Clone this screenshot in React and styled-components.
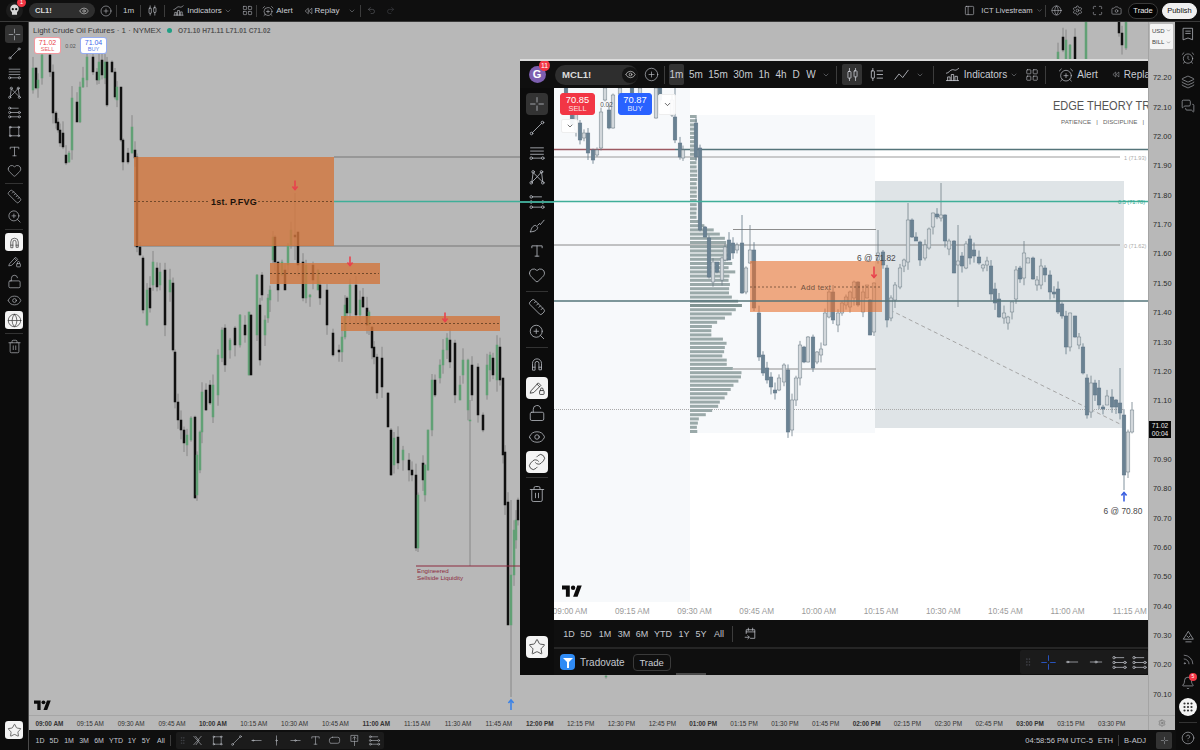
import React from "react";
import styled, { createGlobalStyle } from "styled-components";
import {
  AlarmClock, AlarmClockPlus, Bell, Camera, ChevronDown, CircleHelp, CirclePlus, Eye, Globe, Grip,
  GripVertical, Heart, Layers, LayoutGrid, Link, LockOpen, Maximize, MessagesSquare, PanelLeft, Redo2,
  Rss, Ruler, Settings, Star, Trash2, Undo2, ZoomIn,
} from "lucide-react";

const GlobalStyle = createGlobalStyle`
  html, body { margin: 0; padding: 0; background: #0f0f0f; }
  body { font-family: "Liberation Sans", Arial, sans-serif; overflow: hidden; }
  * { box-sizing: border-box; }
`;

// [x, bodyTop, bodyBottom, up, wickTop, wickBottom] in page pixels
const OUTER_CANDLES = [
  [33,68,90,1],[36,68,88,0],[38,80,88,1],[42,55,78,1],[50,55,72,0],[53,72,113,0],[56,113,123,0],[58,122,130,0],
  [60,130,143,0],[63,133,147,0],[66,155,163,0],[69,153,162,1],[72,98,150,1],[77,102,122,0],[80,87,122,1],
  [83,78,87,1],[87,57,80,1],[93,57,72,0],[97,72,80,0],[99,62,80,1],[102,60,75,0],[105,62,78,1],[107,62,105,0],
  [112,62,72,0],[115,72,97,0],[117,87,100,1],[121,87,140,0],[123,140,162,0],[128,153,162,0],[132,127,153,1],
  [135,150,158,0],[137,157,247,0],[140,247,255,0],[143,258,310,0],[147,290,325,1],[150,288,308,0],[153,262,285,1],
  [157,268,287,0],[160,272,285,1],[165,270,325,0],[170,280,292,1],[173,283,350,0],[175,352,402,0],[178,402,420,0],
  [181,420,430,0],[184,430,443,0],[187,435,445,1],[191,418,440,1],[195,417,498,0],[197,455,495,1],[200,432,470,1],
  [202,392,432,1],[206,390,410,0],[210,385,403,0],[213,385,417,1],[218,355,395,1],[222,330,358,1],[225,328,365,0],
  [230,340,350,1],[235,328,345,0],[240,315,345,1],[245,325,335,0],[249,312,375,1],[251,315,375,0],[257,275,335,1],
  [260,305,360,0],[262,275,295,0],[265,320,335,1],[268,298,318,1],[270,290,300,1],[273,237,260,1],[275,237,262,0],
  [278,262,290,0],[282,262,275,1],[285,270,290,0],[288,245,265,1],[291,230,245,1],[295,235,237,0,193,260],
  [298,232,265,0],[303,262,298,0],[306,265,298,1],[310,295,297,1],[313,265,280,0],[318,270,290,1],[320,285,298,0],
  [327,290,325,0],[333,333,355,0],[339,350,352,0],[342,337,352,1],[345,305,337,1],[347,298,313,0],[350,285,313,1],
  [356,285,315,0],[360,300,315,1],[363,297,307,0],[367,308,325,0],[369,312,325,1],[372,327,348,0],[374,347,357,0],
  [377,357,393,0],[382,358,387,0],[388,393,427,0],[391,430,475,0],[394,438,465,1],[398,437,463,0],[403,450,460,1],
  [409,460,470,0],[412,470,475,0],[416,475,548,0],[418,495,548,1],[423,463,480,0],[425,465,495,1],[428,430,470,1],
  [432,380,430,1],[435,380,395,0],[440,365,378,1],[443,350,365,1],[447,338,350,1],[450,340,362,0],[455,343,395,0],
  [460,385,400,1],[463,360,375,1],[468,360,410,1],[470,420,421,1,400,566],[472,365,395,0],[478,367,415,0],
  [483,415,430,0],[487,365,395,1],[490,355,370,1],[493,358,375,0],[497,345,380,1],[500,347,380,0],[503,378,455,0],
  [505,452,505,0],[508,502,625,0],[511,575,625,1,500,697],[514,530,575,1],[516,520,540,1],[518,500,520,0],
  [606,676,677,1],
  [1058,52,60,1],[1063,37,50,0],[1066,40,60,1],[1070,45,60,1],[1075,37,60,0],[1086,22,60,1],[1119,22,33,0],
  [1122,33,45,0],[1126,22,48,1],
];

const FLOAT_CANDLES = [
  [566,88,98,0],[572,100,125,0],[576,105,130,1],[580,123,140,0],[584,133,138,1],[588,133,153,0],[593,150,160,0],
  [597,150,155,1],[601,112,148,1],[605,88,100,1],[609,110,128,0],[613,95,128,1],[620,88,94,1],[632,88,96,0],
  [640,88,96,1],[656,88,118,1],[660,88,100,0],[672,100,115,1],[675,117,140,0,88],[680,143,157,0],[683,150,158,1],
  [696,123,157,0],[700,148,230,0],[705,227,237,0],[709,238,277,0],[713,262,282,1],[717,262,272,0],[722,258,280,1],
  [725,247,260,1],[729,240,260,0],[733,243,253,0],[737,245,250,1],[742,243,293,0,215],[746,268,292,1],[750,250,263,1,225],
  [754,250,308,0],[759,313,357,0],[763,355,373,0],[767,368,380,0],[771,377,387,0],[775,390,393,0],[779,378,390,1],
  [784,365,382,1],[788,370,432,0],[792,400,430,1],[796,378,400,1],[800,345,378,1],[804,347,362,0],[808,337,362,1],
  [813,337,368,0],[817,352,362,1],[821,349,355,1],[825,313,345,1],[829,292,317,1],[833,292,320,0],[838,313,325,1],
  [842,303,313,1],[846,297,305,1],[850,292,307,1],[854,282,298,1],[858,282,305,0],[863,292,312,1],[867,285,298,1],
  [870,300,335,0],[874,283,332,1],[878,253,260,1,230],[883,252,265,0],[887,268,320,0],[891,298,318,1],[895,285,300,1],
  [900,268,287,1],[904,260,266,1],[908,220,262,1,203],[912,220,237,0],[916,237,241,0],[920,242,260,0],[925,245,258,1],
  [929,229,248,1],[933,213,227,1],[937,214,217,0],[941,215,218,1,183],[945,215,241,0],[949,241,249,1],[954,241,273,0],
  [958,261,265,1,225,307],[962,256,266,0],[966,244,268,1],[970,239,258,0],[974,250,256,0],[979,257,263,0],[983,265,268,1],
  [987,261,265,1],[991,266,294,0],[995,289,303,0],[999,299,317,0],[1004,313,318,1],[1008,317,323,1],[1012,302,312,1],
  [1016,270,299,1],[1020,268,279,0],[1024,253,278,1,241],[1028,258,263,1],[1033,258,279,0],[1037,280,285,1],[1041,266,285,1],
  [1045,268,275,0],[1050,275,292,0],[1054,292,294,0],[1058,289,312,0],[1062,304,316,0],[1066,316,347,0],[1070,313,347,1],
  [1075,316,337,0],[1079,337,345,1],[1083,347,373,0],[1087,378,415,0],[1091,383,412,1],[1095,383,395,0],[1099,388,405,0],
  [1103,407,409,0],[1107,396,405,1],[1112,397,407,0],[1116,400,407,0],[1120,403,413,0,368],[1124,415,475,0,,490],
  [1128,432,472,1,,478],[1132,410,432,1,402],
];

// width of the volume profile at given heights
const PROFILE = [[115,7],[215,7],[222,11],[232,33],[258,43],[275,44],[295,42],[303,55],[311,43],[322,25],[332,20],[340,38],[352,34],[362,40],[370,52],[378,48],[390,40],[403,30],[412,20],[418,8],[433,7]];

const noise = i => {
  const s = Math.sin(i * 12.9898) * 43758.5453;
  return s - Math.floor(s);
};

const profileWidth = y => {
  for (let i = 1; i < PROFILE.length; i++) {
    const [y0, w0] = PROFILE[i - 1];
    const [y1, w1] = PROFILE[i];
    if (y <= y1) return w0 + ((w1 - w0) * (y - y0)) / (y1 - y0);
  }
  return 7;
};

const Glyph = ({ size = 16, children, sw = 1.15 }) => (
  <svg width={size} height={size} viewBox="0 0 28 28" fill="none" stroke="currentColor" strokeWidth={sw * 1.15} strokeLinecap="round" strokeLinejoin="round">
    {children}
  </svg>
);

const Crosshair = p => <Glyph {...p}><path d="M14 4v7M14 17v7M4 14h7M17 14h7" /></Glyph>;
const TrendLine = p => <Glyph {...p}><path d="M7 21L21 7" /><circle cx="5.5" cy="22.5" r="2" /><circle cx="22.5" cy="5.5" r="2" /></Glyph>;
const FibLines = p => <Glyph {...p}><path d="M4 6h20M4 11h20M4 16h20M7 22h14" /><circle cx="5" cy="22" r="2" /><circle cx="23" cy="22" r="2" /></Glyph>;
const PatternTool = p => <Glyph {...p}><path d="M6 22L8 7l15 15L21 6 14 14 6 22" /><circle cx="8" cy="6" r="2" /><circle cx="21" cy="6" r="2" /><circle cx="5" cy="23" r="2" /><circle cx="23" cy="23" r="2" /></Glyph>;
const NodeLines = p => <Glyph {...p}><path d="M7 6h14M7 14h14M7 22h14" /><circle cx="5" cy="6" r="2" /><circle cx="23" cy="14" r="2" /><circle cx="5" cy="14" r="2" /><circle cx="5" cy="22" r="2" /><circle cx="23" cy="22" r="2" /></Glyph>;
const BoxTool = p => <Glyph {...p}><rect x="6" y="6" width="16" height="16" /><circle cx="6" cy="6" r="1.6" /><circle cx="22" cy="6" r="1.6" /><circle cx="6" cy="22" r="1.6" /><circle cx="22" cy="22" r="1.6" /></Glyph>;
const BrushTool = p => <Glyph {...p}><path d="M4 23c1-6 4-10 8-10l3 3c0 5-6 7-11 7zM15 13l3-3M19 12l6-7" /></Glyph>;
const SerifT = p => <Glyph {...p}><path d="M6 9V6h16v3M14 6v16M11 22h6" /></Glyph>;
const MagnetIcon = p => <Glyph {...p}><path d="M7 23V13a7 7 0 0 1 14 0v10h-4V13a3 3 0 0 0-6 0v10zM7 19h4M17 19h4" /></Glyph>;
const PencilLock = p => <Glyph {...p}><path d="M5 18L16 6l4 4L9 21l-5 1zM14 8l4 4" /><rect x="18" y="18" width="7" height="6" rx="1" /><path d="M19.5 18v-2a2 2 0 0 1 4 0v2" /></Glyph>;
const CandlesIcon = p => <Glyph {...p}><path d="M9 4v5M9 20v4M19 4v4M19 18v6" /><rect x="6.5" y="9" width="5" height="11" rx="1" /><rect x="16.5" y="8" width="5" height="10" rx="1" /></Glyph>;
const BarsList = p => <Glyph {...p}><path d="M8 4v4M8 20v4M15 8h9M15 14h9M15 20h9" /><rect x="5.5" y="8" width="5" height="12" rx="1" /></Glyph>;
const LineChart = p => <Glyph {...p}><path d="M3 22l7-9 6 6 9-12" /></Glyph>;
const IndicatorsIcon = p => <Glyph {...p}><path d="M4 24h20M6 24v-6h4v6M12 24v-10h4v10M18 24v-7h4v7M4 12c4 0 6-6 10-6s4 3 10-2" /></Glyph>;
const ReplayIcon = p => <Glyph {...p}><path d="M14 7l-8 7 8 7zM24 7l-8 7 8 7z" /></Glyph>;
const WatchList = p => <Glyph {...p}><path d="M6 4h16v20l-8-3-8 3zM10 9h8M10 13h8" /></Glyph>;
const PeakIcon = p => <Glyph {...p}><path d="M14 5l9 14H5zM9 24h10M11 13l3 3 3-3" /></Glyph>;
const SplitX = p => <Glyph {...p}><path d="M6 5l16 18M22 5L6 23M10 5l7 9M11 23l6-9" /></Glyph>;
const HLine = p => <Glyph {...p}><path d="M4 14h20" /><circle cx="7" cy="14" r="1.5" /></Glyph>;
const VLine = p => <Glyph {...p}><path d="M14 4v20" /><circle cx="14" cy="14" r="1.5" /></Glyph>;
const CrossLine = p => <Glyph {...p}><path d="M4 14h20" /><circle cx="14" cy="14" r="1.8" /></Glyph>;
const Callout = p => <Glyph {...p}><path d="M10 7h11a4 4 0 0 1 4 4v5a4 4 0 0 1-4 4H5l-2-4v-3c0-3 3-6 7-6z" /></Glyph>;
const PinTool = p => <Glyph {...p}><path d="M7 3h14v13H7zM14 16v9M14 6v7M11 9l3-3 3 3" /></Glyph>;
const CalendarJump = p => <Glyph {...p}><path d="M6 14V7h16v16h-8M6 11h16M10 4v4M18 4v4M4 21h7M9 18l3 3-3 3" /></Glyph>;
const PlainPanel = p => <PanelLeft {...p} strokeWidth={1.2} />;

const lucide = Icon => ({ size }) => <Icon size={size} strokeWidth={1.1} />;

const RAIL_OUTER = [
  { I: Crosshair, grey: true }, { I: TrendLine }, { I: FibLines }, { I: PatternTool }, { I: NodeLines }, { I: BoxTool },
  { I: SerifT }, { I: lucide(Heart) }, "sep", { I: lucide(Ruler) }, { I: lucide(ZoomIn) }, "sep", { I: MagnetIcon, white: true },
  { I: PencilLock }, { I: lucide(LockOpen) }, { I: lucide(Eye) }, { I: lucide(Globe), white: true }, "sep", { I: lucide(Trash2) },
];
const RAIL_FLOAT = [
  { I: Crosshair, grey: true }, { I: TrendLine }, { I: FibLines }, { I: PatternTool }, { I: NodeLines }, { I: BrushTool },
  { I: SerifT }, { I: lucide(Heart) }, "sep", { I: lucide(Ruler) }, { I: lucide(ZoomIn) }, "sep", { I: MagnetIcon },
  { I: PencilLock, white: true }, { I: lucide(LockOpen) }, { I: lucide(Eye) }, { I: lucide(Link), white: true }, "sep", { I: lucide(Trash2) },
];

const Screen = styled.div`
  position: relative;
  width: 1200px;
  height: 750px;
  display: flex;
  flex-direction: column;
  background: #0f0f0f;
  color: #c9ccd3;
  overflow: hidden;
`;

const TopBar = styled.header`
  height: 22px;
  flex: none;
  display: flex;
  align-items: center;
  background: #0f0f0f;
  border-bottom: 1px solid #3a3a3a;
  padding-right: 3px;
`;

const Slot = styled.div`
  position: relative;
  flex: none;
  width: ${p => p.$w}px;
  display: flex;
  align-items: center;
  justify-content: center;
  gap: ${p => p.$gap || 0}px;
  color: ${p => p.$color || "#c9ccd3"};
  font-size: ${p => p.$fs || 8}px;
  font-weight: ${p => p.$fw || 500};
  white-space: nowrap;
`;

const Spacer = styled.div`
  flex: 1;
`;

const Sep = styled.div`
  flex: none;
  width: 1px;
  height: ${p => p.$h || 12}px;
  background: #3c3c3c;
  margin: 0 ${p => p.$m || 0}px;
`;

const Badge = styled.span`
  position: absolute;
  top: ${p => p.$top}px;
  left: ${p => p.$left}px;
  min-width: ${p => p.$size}px;
  height: ${p => p.$size}px;
  border-radius: 50%;
  background: #f23645;
  color: #fff;
  font-size: ${p => p.$size * 0.62}px;
  line-height: ${p => p.$size}px;
  text-align: center;
`;

const SymbolPill = styled.div`
  flex: none;
  display: flex;
  align-items: center;
  justify-content: space-between;
  width: ${p => p.$w}px;
  height: ${p => p.$h}px;
  padding: 0 ${p => p.$pad}px;
  border-radius: ${p => p.$h / 2}px;
  background: #2e2e2e;
  color: #dcdcdc;
  font-size: ${p => p.$fs}px;
  font-weight: 700;
`;

const TradeBtn = styled.div`
  flex: none;
  width: ${p => p.$w}px;
  height: 16px;
  margin-left: ${p => p.$ml || 0}px;
  border-radius: 8px;
  border: 1px solid ${p => (p.$solid ? "#f0f0f0" : "#3a3a3a")};
  background: ${p => (p.$solid ? "#f0f0f0" : "#050505")};
  color: ${p => (p.$solid ? "#111" : "#eee")};
  font-size: 7.5px;
  line-height: 14px;
  text-align: center;
`;

const Middle = styled.div`
  flex: 1;
  min-height: 0;
  display: flex;
`;

const Rail = styled.nav`
  flex: none;
  width: ${p => p.$w}px;
  display: flex;
  flex-direction: column;
  align-items: center;
  padding-top: ${p => p.$top}px;
  padding-bottom: ${p => p.$bottom}px;
  background: #0c0c0c;
  color: #b4b7be;
`;

const RailSlot = styled.div`
  flex: none;
  height: ${p => p.$h}px;
  display: flex;
  align-items: center;
  justify-content: center;
`;

const Chip = styled.div`
  position: relative;
  width: ${p => p.$size}px;
  height: ${p => p.$size}px;
  display: flex;
  align-items: center;
  justify-content: center;
  border-radius: ${p => (p.$round ? "50%" : `${p.$size * 0.18}px`)};
  background: ${p => (p.$white ? "#f4f4f4" : p.$grey ? "#333" : "transparent")};
  color: ${p => (p.$white ? "#333" : "inherit")};
`;

const RailSep = styled.div`
  flex: none;
  width: ${p => p.$w}px;
  height: 1px;
  background: #333;
  margin: ${p => p.$m}px 0;
`;

const RailPush = styled.div`
  flex: 1;
`;

const Center = styled.div`
  flex: 1;
  min-width: 0;
  display: flex;
  flex-direction: column;
  border-left: 1px solid #4a4a4a;
`;

const ChartRow = styled.div`
  flex: 1;
  min-height: 0;
  display: flex;
`;

const ChartPane = styled.main`
  flex: 1;
  min-width: 0;
  display: flex;
  flex-direction: column;
`;

const Plot = styled.div`
  position: relative;
  flex: 1;
  min-height: 0;
  background: ${p => p.$bg};
  overflow: hidden;
`;

const PlotSvg = styled.svg`
  position: absolute;
  inset: 0;
  width: 100%;
  height: 100%;
  display: block;
`;

const Legend = styled.div`
  position: absolute;
  top: 1px;
  left: 4px;
  display: flex;
  align-items: center;
  height: 14px;
  color: #3a3a3a;
  font-size: 7.9px;
  white-space: nowrap;
`;

const LiveDot = styled.span`
  width: 5px;
  height: 5px;
  margin: 0 6px 0 6px;
  border-radius: 50%;
  background: #1f9f84;
`;

const Ohlc = styled.span`
  font-size: 6.6px;
  font-weight: 600;
  color: #555;
  letter-spacing: 0.1px;
`;

const OrderRow = styled.div`
  position: absolute;
  top: ${p => p.$top}px;
  left: ${p => p.$left}px;
  display: flex;
  align-items: center;
`;

const OrderBtn = styled.div`
  width: ${p => p.$w}px;
  height: ${p => p.$h}px;
  display: flex;
  flex-direction: column;
  align-items: center;
  justify-content: center;
  border-radius: 3px;
  font-size: ${p => p.$fs}px;
  line-height: 1.1;
  background: ${p => (p.$solid ? p.$color : "#fff")};
  color: ${p => (p.$solid ? "#fff" : p.$color)};
  border: 1px solid ${p => (p.$solid ? p.$color : p.$color + "88")};
  font-weight: 500;
`;

const OrderSmall = styled.span`
  font-size: ${p => p.$fs}px;
  font-weight: 400;
  opacity: 0.85;
`;

const Spread = styled.span`
  width: ${p => p.$w}px;
  text-align: center;
  font-size: ${p => p.$fs}px;
  color: #555;
`;

const ChevBox = styled.div`
  position: ${p => (p.$float ? "absolute" : "static")};
  top: ${p => p.$top}px;
  left: ${p => p.$left}px;
  width: ${p => p.$w}px;
  height: ${p => p.$h}px;
  margin-left: ${p => p.$ml || 0}px;
  display: flex;
  align-items: center;
  justify-content: center;
  background: rgba(255, 255, 255, 0.92);
  border: 1px solid #eee;
  border-radius: 2px;
  color: #333;
`;

const LogoMark = styled.svg`
  position: absolute;
  left: ${p => p.$left}px;
  bottom: ${p => p.$bottom}px;
  color: #0b0b0b;
`;

const TimeAxis = styled.div`
  flex: none;
  height: ${p => p.$h}px;
  display: grid;
  grid-template-columns: repeat(${p => p.$n}, ${p => p.$step}px);
  margin-left: ${p => p.$ml}px;
  align-items: center;
  white-space: nowrap;
  overflow: hidden;
`;

const TimeWrap = styled.div`
  flex: none;
  background: ${p => p.$bg};
  border-top: ${p => (p.$line ? "1px solid #a6a6a6" : "none")};
  overflow: hidden;
`;

const TimeLabel = styled.span`
  text-align: center;
  font-size: ${p => p.$fs}px;
  font-weight: ${p => (p.$bold ? 700 : 400)};
  color: ${p => p.$color};
`;

const PriceAxis = styled.aside`
  position: relative;
  flex: none;
  width: 27px;
  display: flex;
  flex-direction: column;
  background: #b8b8b8;
  border-left: 1px solid #a4a4a4;
  margin-right: 1px;
`;

const UnitBox = styled.div`
  flex: none;
  height: 25px;
  margin: 2px 2px 0 1px;
  padding: 1px 2px;
  display: flex;
  flex-direction: column;
  justify-content: space-around;
  background: #f4f4f4;
  border-radius: 1px;
  color: #444;
  font-size: 6px;
`;

const UnitRow = styled.div`
  display: flex;
  justify-content: space-between;
  align-items: center;
`;

const PriceList = styled.div`
  flex: none;
  margin-top: 14.3px;
  display: flex;
  flex-direction: column;
`;

const PriceLabel = styled.div`
  height: 29.37px;
  line-height: 29.37px;
  padding-left: 4px;
  font-size: 7.4px;
  color: #2a2a2a;
`;

const PriceTag = styled.div`
  position: absolute;
  top: 399px;
  left: 0;
  width: 22px;
  height: 17px;
  background: #0a0a0a;
  color: #eee;
  font-size: 6.6px;
  line-height: 8px;
  text-align: center;
  padding-top: 1px;
`;

const AxisCorner = styled.div`
  margin-top: auto;
  flex: none;
  height: 15px;
  border-top: 1px solid #a6a6a6;
  display: flex;
  align-items: center;
  justify-content: center;
  color: #555;
`;

const BottomBar = styled.footer`
  flex: none;
  height: 20px;
  display: flex;
  align-items: center;
  background: #0f0f0f;
  padding: 0 4px;
`;

const RangeRow = styled.div`
  flex: none;
  display: flex;
  align-items: center;
`;

const RangeBtn = styled.span`
  width: ${p => p.$w}px;
  text-align: center;
  font-size: ${p => p.$fs}px;
  color: #c4c7ce;
`;

const ToolPanel = styled.div`
  flex: none;
  display: flex;
  align-items: center;
  height: ${p => p.$h}px;
  margin-left: ${p => p.$ml || 0}px;
  background: #1b1b1b;
  border-radius: 2px;
  color: #b4b7be;
`;

const ToolSlot = styled.div`
  flex: none;
  width: ${p => p.$w}px;
  display: flex;
  align-items: center;
  justify-content: center;
  color: ${p => p.$color || "inherit"};
`;

const StatusText = styled.span`
  font-size: 7.6px;
  color: #c4c7ce;
  margin: 0 ${p => p.$m || 0}px;
  white-space: nowrap;
`;

const StatusBtn = styled.div`
  width: 16px;
  height: 17px;
  margin-left: 5px;
  display: flex;
  align-items: center;
  justify-content: center;
  background: #333;
  border-radius: 2px;
`;

const FloatWindow = styled.section`
  position: absolute;
  left: 520px;
  top: 59px;
  width: 628px;
  height: 616px;
  display: flex;
  flex-direction: column;
  background: #0f0f0f;
  border-top: 2px solid #dcdcdc;
  overflow: hidden;
`;

const RailLevelLine = styled.div`
  position: absolute;
  top: 140px;
  left: 0;
  width: 34px;
  height: 2px;
  background: #3fa391;
`;

const ScrollHandle = styled.div`
  position: absolute;
  left: 156px;
  bottom: 0;
  width: 30px;
  height: 2px;
  background: #4a4a4a;
`;

const FloatBar = styled.div`
  flex: none;
  height: 27px;
  display: flex;
  align-items: center;
  background: #0f0f0f;
  white-space: nowrap;
`;

const Avatar = styled.div`
  position: relative;
  flex: none;
  width: 34px;
  display: flex;
  justify-content: center;
`;

const AvatarDisc = styled.div`
  width: 17px;
  height: 17px;
  border-radius: 50%;
  background: #7d5fb0;
  color: #fff;
  font-size: 11px;
  font-weight: 700;
  line-height: 17px;
  text-align: center;
`;

const EyeDot = styled.span`
  width: 16px;
  height: 16px;
  margin-right: -7px;
  display: flex;
  align-items: center;
  justify-content: center;
  border-radius: 50%;
  background: #141414;
  color: #ddd;
`;

const IntervalBtn = styled.div`
  flex: none;
  width: ${p => p.$w}px;
  height: ${p => (p.$active ? 21 : 14)}px;
  margin-left: ${p => p.$ml || 0}px;
  display: flex;
  align-items: center;
  justify-content: center;
  gap: ${p => p.$gap || 0}px;
  border-radius: 2px;
  background: ${p => (p.$active ? "#333" : "transparent")};
  color: #c9ccd3;
  font-size: ${p => p.$fs || 10}px;
`;

const FloatBody = styled.div`
  flex: 1;
  min-height: 0;
  display: flex;
`;

const FloatMain = styled.div`
  flex: 1;
  min-width: 0;
  display: flex;
  flex-direction: column;
`;

const RangeBar = styled.div`
  flex: none;
  height: 27px;
  display: flex;
  align-items: center;
  padding-left: 7px;
  background: #0f0f0f;
  color: #c4c7ce;
`;

const TradeBar = styled.div`
  flex: none;
  height: 28px;
  display: flex;
  align-items: center;
  padding-left: 6px;
  border-top: 2px solid #262626;
  background: #0f0f0f;
`;

const BrokerLogo = styled.div`
  flex: none;
  width: 15px;
  height: 16px;
  display: flex;
  align-items: center;
  justify-content: center;
  border-radius: 4px;
  background: #2f8bf5;
  color: #fff;
`;

const BrokerName = styled.span`
  margin-left: 5px;
  font-size: 10px;
  color: #c4c7ce;
`;

const BrokerTrade = styled.div`
  flex: none;
  width: 38px;
  height: 17px;
  margin-left: 8px;
  border: 1px solid #3a3a3a;
  border-radius: 4px;
  font-size: 9.5px;
  line-height: 15px;
  text-align: center;
  color: #c9ccd3;
`;

const ChartText = styled.text`
  font-family: "Liberation Sans", Arial, sans-serif;
  font-size: ${p => p.$fs}px;
  font-weight: ${p => p.$fw || 400};
  fill: ${p => p.$fill};
  text-anchor: ${p => p.$anchor || "start"};
  letter-spacing: ${p => p.$ls || 0}px;
  white-space: pre;
`;

const SmallChev = ({ size = 8 }) => <ChevronDown size={size} strokeWidth={1.6} color="#8a8d94" />;

const TvLogo = ({ width, left, bottom }) => (
  <LogoMark $left={left} $bottom={bottom} width={width} viewBox="0 0 36 22" fill="currentColor">
    <path d="M14 21H7V8H0V1h14z" />
    <circle cx="20" cy="5" r="4" />
    <path d="M28 21h-8l7.5-20h8z" />
  </LogoMark>
);

const Arrow = ({ x, y, color, up, h = 9 }) => {
  const dir = up ? -1 : 1;
  return (
    <g stroke={color} strokeWidth="1.6" fill="none">
      <path d={`M${x} ${y - (dir * h) / 2}V${y + (dir * h) / 2}`} />
      <path d={`M${x - 2.6} ${y + (dir * h) / 2 - dir * 3}L${x} ${y + (dir * h) / 2}L${x + 2.6} ${y + (dir * h) / 2 - dir * 3}`} />
    </g>
  );
};

const Candles = ({ data, width, upFill, downFill, upStroke, downStroke, wick, reach }) =>
  data.map(([x, top, bot, up, wt, wb], i) => {
    const hi = wt !== undefined ? wt : top - noise(i + 1) * reach;
    const lo = wb !== undefined ? wb : bot + noise(i + 50) * reach;
    return (
      <g key={x + "-" + i}>
        <line x1={x} x2={x} y1={hi} y2={lo} stroke={wick || (up ? upStroke : downStroke)} strokeWidth="0.8" />
        <rect x={x - width / 2} y={top} width={width} height={Math.max(bot - top, 1)} fill={up ? upFill : downFill} stroke={up ? upStroke : downStroke} strokeWidth="0.5" />
      </g>
    );
  });

const OuterDrawing = () => (
  <PlotSvg viewBox="29 22 1119 693" preserveAspectRatio="none">
    <line x1="334" x2="1148" y1="157" y2="157" stroke="#777" strokeWidth="1" />
    <line x1="334" x2="1148" y1="201.5" y2="201.5" stroke="#3fae98" strokeWidth="1.7" />
    <line x1="134" x2="1148" y1="246" y2="246" stroke="#777" strokeWidth="1" />
    <Candles data={OUTER_CANDLES} width={2} upFill="#62a176" downFill="#111" upStroke="#62a176" downStroke="#111" wick="#7b7b7b" reach={12} />
    <rect x="134" y="157" width="200" height="89" fill="rgba(210,120,64,.82)" />
    <rect x="270" y="263" width="110" height="21" fill="rgba(210,120,64,.82)" />
    <rect x="341" y="316" width="159" height="15" fill="rgba(210,120,64,.82)" />
    <line x1="134" x2="210" y1="201.5" y2="201.5" stroke="#5a3a20" strokeWidth="0.8" strokeDasharray="2 2" />
    <line x1="258" x2="334" y1="201.5" y2="201.5" stroke="#5a3a20" strokeWidth="0.8" strokeDasharray="2 2" />
    <line x1="270" x2="379" y1="273.5" y2="273.5" stroke="#5a3a20" strokeWidth="0.8" strokeDasharray="2 2" />
    <line x1="341" x2="499" y1="323.5" y2="323.5" stroke="#5a3a20" strokeWidth="0.8" strokeDasharray="2 2" />
    <ChartText x="234" y="205" $fs={9} $fw={700} $fill="#1c120a" $anchor="middle" $ls={0.2}>1st. P.FVG</ChartText>
    <Arrow x={295} y={185} color="#e8424d" />
    <Arrow x={350} y={261} color="#e8424d" />
    <Arrow x={445} y={317} color="#e8424d" />
    <line x1="416" x2="525" y1="566" y2="566" stroke="#8c2b3e" strokeWidth="1" />
    <ChartText x="417" y="573" $fs={6.2} $fill="#8c2b3e">Engineered</ChartText>
    <ChartText x="417" y="579.5" $fs={6.2} $fill="#8c2b3e">Sellside Liquidity</ChartText>
    <Arrow x={511} y={705} color="#3b82e6" up h={10} />
  </PlotSvg>
);

const FloatDrawing = () => {
  const bars = [];
  for (let y = 115; y < 433; y += 4.2) {
    bars.push(<rect key={y} x="690" y={y} width={profileWidth(y) * (0.88 + noise(y) * 0.16)} height="3" fill={y > 300 && y < 306 ? "#7f9291" : "#9aa9a9"} />);
  }
  return (
    <PlotSvg viewBox="554 88 594 514" preserveAspectRatio="none">
      <rect x="554" y="88" width="136" height="514" fill="#f7f9fb" />
      <rect x="690" y="115" width="185" height="318" fill="#f7f9fb" />
      <rect x="875" y="181" width="249" height="247" fill="#dfe4e7" />
      <line x1="554" x2="675" y1="149.5" y2="149.5" stroke="#9c5a62" strokeWidth="1.3" />
      <line x1="675" x2="1148" y1="149.5" y2="149.5" stroke="#55747a" strokeWidth="1.3" />
      <line x1="554" x2="1120" y1="157" y2="157" stroke="#9b9b9b" strokeWidth="1" />
      <line x1="733" x2="876" y1="229.5" y2="229.5" stroke="#8d8d8d" strokeWidth="1" />
      <line x1="554" x2="1120" y1="245" y2="245" stroke="#8a8a8a" strokeWidth="1" />
      <line x1="733" x2="876" y1="369" y2="369" stroke="#8d8d8d" strokeWidth="1" />
      <line x1="554" x2="1124" y1="409.5" y2="409.5" stroke="#aaa" strokeDasharray="1 1" />
      <line x1="890" x2="1122" y1="310" y2="425" stroke="#a6a6a6" strokeDasharray="4 3" />
      {bars}
      <Candles data={FLOAT_CANDLES} width={3.6} upFill="#d2d7db" downFill="#6a8293" upStroke="#6f7f88" downStroke="#5f7686" reach={8} />
      <rect x="750" y="261" width="132" height="51" fill="rgba(232,114,48,.6)" />
      <line x1="750" x2="798" y1="287" y2="287" stroke="#6b4a33" strokeWidth="0.8" strokeDasharray="2 2" />
      <line x1="834" x2="882" y1="287" y2="287" stroke="#6b4a33" strokeWidth="0.8" strokeDasharray="2 2" />
      <ChartText x="816" y="290" $fs={7.6} $fill="#6e5140" $anchor="middle" $ls={0.3}>Add text</ChartText>
      <line x1="554" x2="1148" y1="301" y2="301" stroke="#55747a" strokeWidth="1.3" />
      <line x1="554" x2="1148" y1="201.5" y2="201.5" stroke="#3fae98" strokeWidth="1.7" />
      <ChartText x="1053" y="110" $fs={13} $fill="#555" textLength="132" lengthAdjust="spacingAndGlyphs">EDGE THEORY TRADING</ChartText>
      <ChartText x="1061" y="124" $fs={6.2} $fill="#666">PATIENCE   |   DISCIPLINE   |   CONSISTENCY</ChartText>
      <ChartText x="1124" y="160" $fs={5.6} $fill="#aaa">1 (71.93)</ChartText>
      <ChartText x="1118" y="204" $fs={5.6} $fill="#2fa78f">0.5 (71.78)</ChartText>
      <ChartText x="1124" y="248" $fs={5.6} $fill="#aaa">0 (71.62)</ChartText>
      <ChartText x="857" y="261" $fs={8.4} $fill="#4a4a4a">6 @ 71.82</ChartText>
      <Arrow x={874} y={272} color="#e8424d" h={11} />
      <Arrow x={1124} y={497} color="#3b5fe0" up h={9} />
      <ChartText x="1123" y="514" $fs={8.4} $fill="#4a4a4a" $anchor="middle">6 @ 70.80</ChartText>
    </PlotSvg>
  );
};

const ToolRail = ({ items, w, top, bottom, pitch, chip, icon, sepW, sepM }) => (
  <Rail $w={w} $top={top} $bottom={bottom}>
    {items.map((it, i) =>
      it === "sep" ? (
        <RailSep key={i} $w={sepW} $m={sepM} />
      ) : (
        <RailSlot key={i} $h={pitch}>
          <Chip $size={chip} $grey={it.grey} $white={it.white}>
            <it.I size={icon} />
          </Chip>
        </RailSlot>
      )
    )}
    <RailPush />
    <Chip $size={chip} $white>
      <Star size={icon} strokeWidth={1.1} />
    </Chip>
  </Rail>
);

const OUTER_RANGE = [["1D", 14], ["5D", 14], ["1M", 16], ["3M", 14], ["6M", 16], ["YTD", 18], ["1Y", 14], ["5Y", 14], ["All", 16]];
const FLOAT_RANGE = [["1D", 16], ["5D", 18], ["1M", 20], ["3M", 18], ["6M", 18], ["YTD", 24], ["1Y", 18], ["5Y", 16], ["All", 20]];
const OUTER_TIMES = ["09:00 AM", "09:15 AM", "09:30 AM", "09:45 AM", "10:00 AM", "10:15 AM", "10:30 AM", "10:45 AM", "11:00 AM", "11:15 AM", "11:30 AM", "11:45 AM", "12:00 PM", "12:15 PM", "12:30 PM", "12:45 PM", "01:00 PM", "01:15 PM", "01:30 PM", "01:45 PM", "02:00 PM", "02:15 PM", "02:30 PM", "02:45 PM", "03:00 PM", "03:15 PM", "03:30 PM"];
const FLOAT_TIMES = OUTER_TIMES.slice(0, 10);
// 71.00 sits behind the last-price tag, so its row stays empty
const PRICES = ["72.20", "72.10", "72.00", "71.90", "71.80", "71.70", "71.60", "71.50", "71.40", "71.30", "71.20", "71.10", "", "70.90", "70.80", "70.70", "70.60", "70.50", "70.40", "70.30", "70.20", "70.10"];
const BOTTOM_TOOLS = [SplitX, BoxTool, TrendLine, HLine, VLine, CrossLine, SerifT, Callout, PinTool, NodeLines];
const FLOAT_INTERVALS = [["5m", 22], ["15m", 22], ["30m", 28], ["1h", 14], ["4h", 20], ["D", 10], ["W", 20]];

export default function App() {
  return (
    <Screen>
      <GlobalStyle />
      <TopBar>
        <Slot $w={29}>
          <svg width="17" height="17" viewBox="0 0 20 20">
            <circle cx="10" cy="10" r="10" fill="#1c1c1c" />
            <path d="M5 8a5 5 0 0 1 10 0c0 2-1 3-2 4v3H7v-3C6 11 5 10 5 8z" fill="#d8d8d8" />
            <circle cx="8" cy="8.5" r="1.3" fill="#111" />
            <circle cx="12" cy="8.5" r="1.3" fill="#111" />
          </svg>
          <Badge $top={-4} $left={17} $size={9}>1</Badge>
        </Slot>
        <SymbolPill $w={66} $h={15} $pad={6} $fs={7.6}>
          CL1!
          <Eye size={10} strokeWidth={1.4} />
        </SymbolPill>
        <Slot $w={21}><CirclePlus size={12} strokeWidth={1.1} /></Slot>
        <Sep />
        <Slot $w={23}>1m</Slot>
        <Sep />
        <Slot $w={23}><CandlesIcon size={13} /></Slot>
        <Sep />
        <Slot $w={74} $gap={2}>
          <IndicatorsIcon size={13} />
          Indicators
          <SmallChev />
        </Slot>
        <Slot $w={17}><LayoutGrid size={11} strokeWidth={1.1} /></Slot>
        <Sep />
        <Slot $w={41} $gap={2}>
          <AlarmClockPlus size={12} strokeWidth={1.1} />
          Alert
        </Slot>
        <Slot $w={46} $gap={2}>
          <ReplayIcon size={10} />
          Replay
        </Slot>
        <Slot $w={16}><SmallChev /></Slot>
        <Sep />
        <Slot $w={20} $color="#6f7178"><Undo2 size={9} strokeWidth={1.3} /></Slot>
        <Slot $w={19} $color="#4d4f55"><Redo2 size={9} strokeWidth={1.3} /></Slot>
        <Spacer />
        <Slot $w={22}><PlainPanel size={11} /></Slot>
        <Slot $w={54} $fs={7.6}>ICT Livestream</Slot>
        <Slot $w={11}><SmallChev size={7} /></Slot>
        <Sep />
        <Slot $w={21}><Globe size={11} strokeWidth={1.1} /></Slot>
        <Slot $w={20}><Settings size={11} strokeWidth={1.1} /></Slot>
        <Slot $w={20}><Maximize size={11} strokeWidth={1.1} /></Slot>
        <Slot $w={19}><Camera size={11} strokeWidth={1.1} /></Slot>
        <TradeBtn $w={30} $ml={2}>Trade</TradeBtn>
        <TradeBtn $w={35} $ml={4} $solid>Publish</TradeBtn>
      </TopBar>

      <Middle>
        <ToolRail items={RAIL_OUTER} w={28} top={2.7} bottom={11} pitch={19.5} chip={18} icon={15} sepW={18} sepM={2.7} />
        <Center>
          <ChartRow>
            <ChartPane>
              <Plot $bg="#b8b8b8">
                <OuterDrawing />
                <Legend>
                  Light Crude Oil Futures · 1 · NYMEX
                  <LiveDot />
                  <Ohlc>O71.10 H71.11 L71.01 C71.02</Ohlc>
                </Legend>
                <OrderRow $top={15} $left={5}>
                  <OrderBtn $w={27} $h={17} $fs={7} $color="#e8424d">
                    71.02
                    <OrderSmall $fs={5.6}>SELL</OrderSmall>
                  </OrderBtn>
                  <Spread $w={19} $fs={5.4}>0.02</Spread>
                  <OrderBtn $w={27} $h={17} $fs={7} $color="#3a66e8">
                    71.04
                    <OrderSmall $fs={5.6}>BUY</OrderSmall>
                  </OrderBtn>
                </OrderRow>
                <TvLogo width={17} left={5} bottom={5} />
              </Plot>
              <TimeWrap $bg="#b8b8b8" $line>
                <TimeAxis $h={14} $n={27} $step={40.87} $ml={0}>
                  {OUTER_TIMES.map(t => (
                    <TimeLabel key={t} $fs={6.4} $bold={t.includes(":00")} $color="#333">{t}</TimeLabel>
                  ))}
                </TimeAxis>
              </TimeWrap>
            </ChartPane>
            <PriceAxis>
              <UnitBox>
                <UnitRow>USD <ChevronDown size={5} strokeWidth={2} /></UnitRow>
                <UnitRow>BILL <ChevronDown size={5} strokeWidth={2} /></UnitRow>
              </UnitBox>
              <PriceList>
                {PRICES.map((p, i) => <PriceLabel key={i}>{p}</PriceLabel>)}
              </PriceList>
              <PriceTag>71.02<br />00:04</PriceTag>
              <AxisCorner><Settings size={8} strokeWidth={1.4} /></AxisCorner>
            </PriceAxis>
          </ChartRow>
          <BottomBar>
            <RangeRow>
              {OUTER_RANGE.map(([t, w]) => <RangeBtn key={t} $w={w} $fs={7}>{t}</RangeBtn>)}
            </RangeRow>
            <Sep $m={1} $h={11} />
            <ToolPanel $h={17} $ml={4}>
              <ToolSlot $w={12} $color="#4d4f55"><GripVertical size={9} strokeWidth={1.3} /></ToolSlot>
              {BOTTOM_TOOLS.map((T, i) => (
                <ToolSlot key={i} $w={19.6}><T size={13} /></ToolSlot>
              ))}
            </ToolPanel>
            <Spacer />
            <StatusText>04:58:56 PM UTC-5</StatusText>
            <StatusText $m={5}>ETH</StatusText>
            <Sep $h={11} />
            <StatusText $m={5}>B-ADJ</StatusText>
            <StatusBtn><Crosshair size={9} /></StatusBtn>
          </BottomBar>
        </Center>
        <Rail $w={24} $top={0} $bottom={0}>
          <RailSlot $h={24}><WatchList size={16} /></RailSlot>
          <RailSlot $h={24}><AlarmClock size={14} strokeWidth={1.1} /></RailSlot>
          <RailSlot $h={24}><Layers size={14} strokeWidth={1.1} /></RailSlot>
          <RailSlot $h={24}><MessagesSquare size={14} strokeWidth={1.1} /></RailSlot>
          <RailPush />
          <RailSlot $h={23}><PeakIcon size={15} /></RailSlot>
          <RailSlot $h={23}><Rss size={13} strokeWidth={1.1} /></RailSlot>
          <RailSlot $h={24}>
            <Chip $size={16}>
              <Bell size={14} strokeWidth={1.1} />
              <Badge $top={-2} $left={9} $size={8}>5</Badge>
            </Chip>
          </RailSlot>
          <RailSlot $h={24}>
            <Chip $size={18} $white $round><Grip size={12} strokeWidth={2.4} /></Chip>
          </RailSlot>
          <RailSep $w={18} $m={3} />
          <RailSlot $h={24}><CircleHelp size={14} strokeWidth={1.1} /></RailSlot>
        </Rail>
      </Middle>

      <FloatWindow>
        <FloatBar>
          <Avatar>
            <AvatarDisc>G</AvatarDisc>
            <Badge $top={-6} $left={19} $size={11}>11</Badge>
          </Avatar>
          <Slot $w={1} />
          <SymbolPill $w={83} $h={20} $pad={7} $fs={9.6}>
            MCL1!
            <EyeDot><Eye size={11} strokeWidth={1.4} /></EyeDot>
          </SymbolPill>
          <Slot $w={26}><CirclePlus size={15} strokeWidth={1} /></Slot>
          <Sep $h={18} />
          <IntervalBtn $w={15} $ml={4} $active>1m</IntervalBtn>
          <IntervalBtn $w={1} />
          {FLOAT_INTERVALS.map(([t, w]) => <IntervalBtn key={t} $w={w}>{t}</IntervalBtn>)}
          <IntervalBtn $w={10}><SmallChev /></IntervalBtn>
          <Sep $h={18} $m={5} />
          <IntervalBtn $w={20} $active><CandlesIcon size={17} /></IntervalBtn>
          <IntervalBtn $w={28}><BarsList size={17} /></IntervalBtn>
          <IntervalBtn $w={22}><LineChart size={17} /></IntervalBtn>
          <IntervalBtn $w={16}><SmallChev /></IntervalBtn>
          <Sep $h={18} $m={5} />
          <IntervalBtn $w={80} $gap={3} $ml={2}>
            <IndicatorsIcon size={17} />
            Indicators
            <SmallChev />
          </IntervalBtn>
          <IntervalBtn $w={21}><LayoutGrid size={14} strokeWidth={1} /></IntervalBtn>
          <Sep $h={18} $m={3} />
          <IntervalBtn $w={48} $gap={3} $ml={5}>
            <AlarmClockPlus size={16} strokeWidth={1} />
            Alert
          </IntervalBtn>
          <IntervalBtn $w={44} $gap={4} $ml={9}>
            <ReplayIcon size={13} />
            Replay
          </IntervalBtn>
        </FloatBar>
        <FloatBody>
          <ToolRail items={RAIL_FLOAT} w={34} top={3.7} bottom={17} pitch={24.5} chip={22} icon={18} sepW={22} sepM={3.2} />
          <FloatMain>
            <Plot $bg="#fff">
              <FloatDrawing />
              <OrderRow $top={5} $left={6}>
                <OrderBtn $w={35} $h={22} $fs={9.4} $color="#f23645" $solid>
                  70.85
                  <OrderSmall $fs={7.4}>SELL</OrderSmall>
                </OrderBtn>
                <Spread $w={23} $fs={6.4}>0.02</Spread>
                <OrderBtn $w={34} $h={22} $fs={9.4} $color="#2962ff" $solid>
                  70.87
                  <OrderSmall $fs={7.4}>BUY</OrderSmall>
                </OrderBtn>
                <ChevBox $w={18} $h={21} $ml={6}><ChevronDown size={9} strokeWidth={2} /></ChevBox>
              </OrderRow>
              <ChevBox $float $top={31} $left={7} $w={17} $h={14}><ChevronDown size={8} strokeWidth={2} /></ChevBox>
              <TvLogo width={20} left={8} bottom={5} />
            </Plot>
            <TimeWrap $bg="#fff">
              <TimeAxis $h={18} $n={10} $step={62.2} $ml={-15}>
                {FLOAT_TIMES.map(t => <TimeLabel key={t} $fs={8.2} $color="#9a9a9a">{t}</TimeLabel>)}
              </TimeAxis>
            </TimeWrap>
            <RangeBar>
              {FLOAT_RANGE.map(([t, w]) => <RangeBtn key={t} $w={w} $fs={9}>{t}</RangeBtn>)}
              <Sep $h={16} $m={3} />
              <Slot $w={28}><CalendarJump size={15} /></Slot>
            </RangeBar>
            <TradeBar>
              <BrokerLogo>
                <svg width="10" height="11" viewBox="0 0 10 11" fill="currentColor"><path d="M0 1h10L6 5v6H4V5z" /></svg>
              </BrokerLogo>
              <BrokerName>Tradovate</BrokerName>
              <BrokerTrade>Trade</BrokerTrade>
              <Spacer />
              <ToolPanel $h={24}>
                <ToolSlot $w={16} $color="#4d4f55"><GripVertical size={10} strokeWidth={1.3} /></ToolSlot>
                <ToolSlot $w={24} $color="#2a5bd0"><Crosshair size={19} /></ToolSlot>
                <ToolSlot $w={24}><HLine size={16} /></ToolSlot>
                <ToolSlot $w={24}><CrossLine size={16} /></ToolSlot>
                <ToolSlot $w={23}><NodeLines size={17} /></ToolSlot>
                <ToolSlot $w={17}><NodeLines size={17} /></ToolSlot>
              </ToolPanel>
            </TradeBar>
          </FloatMain>
        </FloatBody>
        <RailLevelLine />
        <ScrollHandle />
      </FloatWindow>
    </Screen>
  );
}
